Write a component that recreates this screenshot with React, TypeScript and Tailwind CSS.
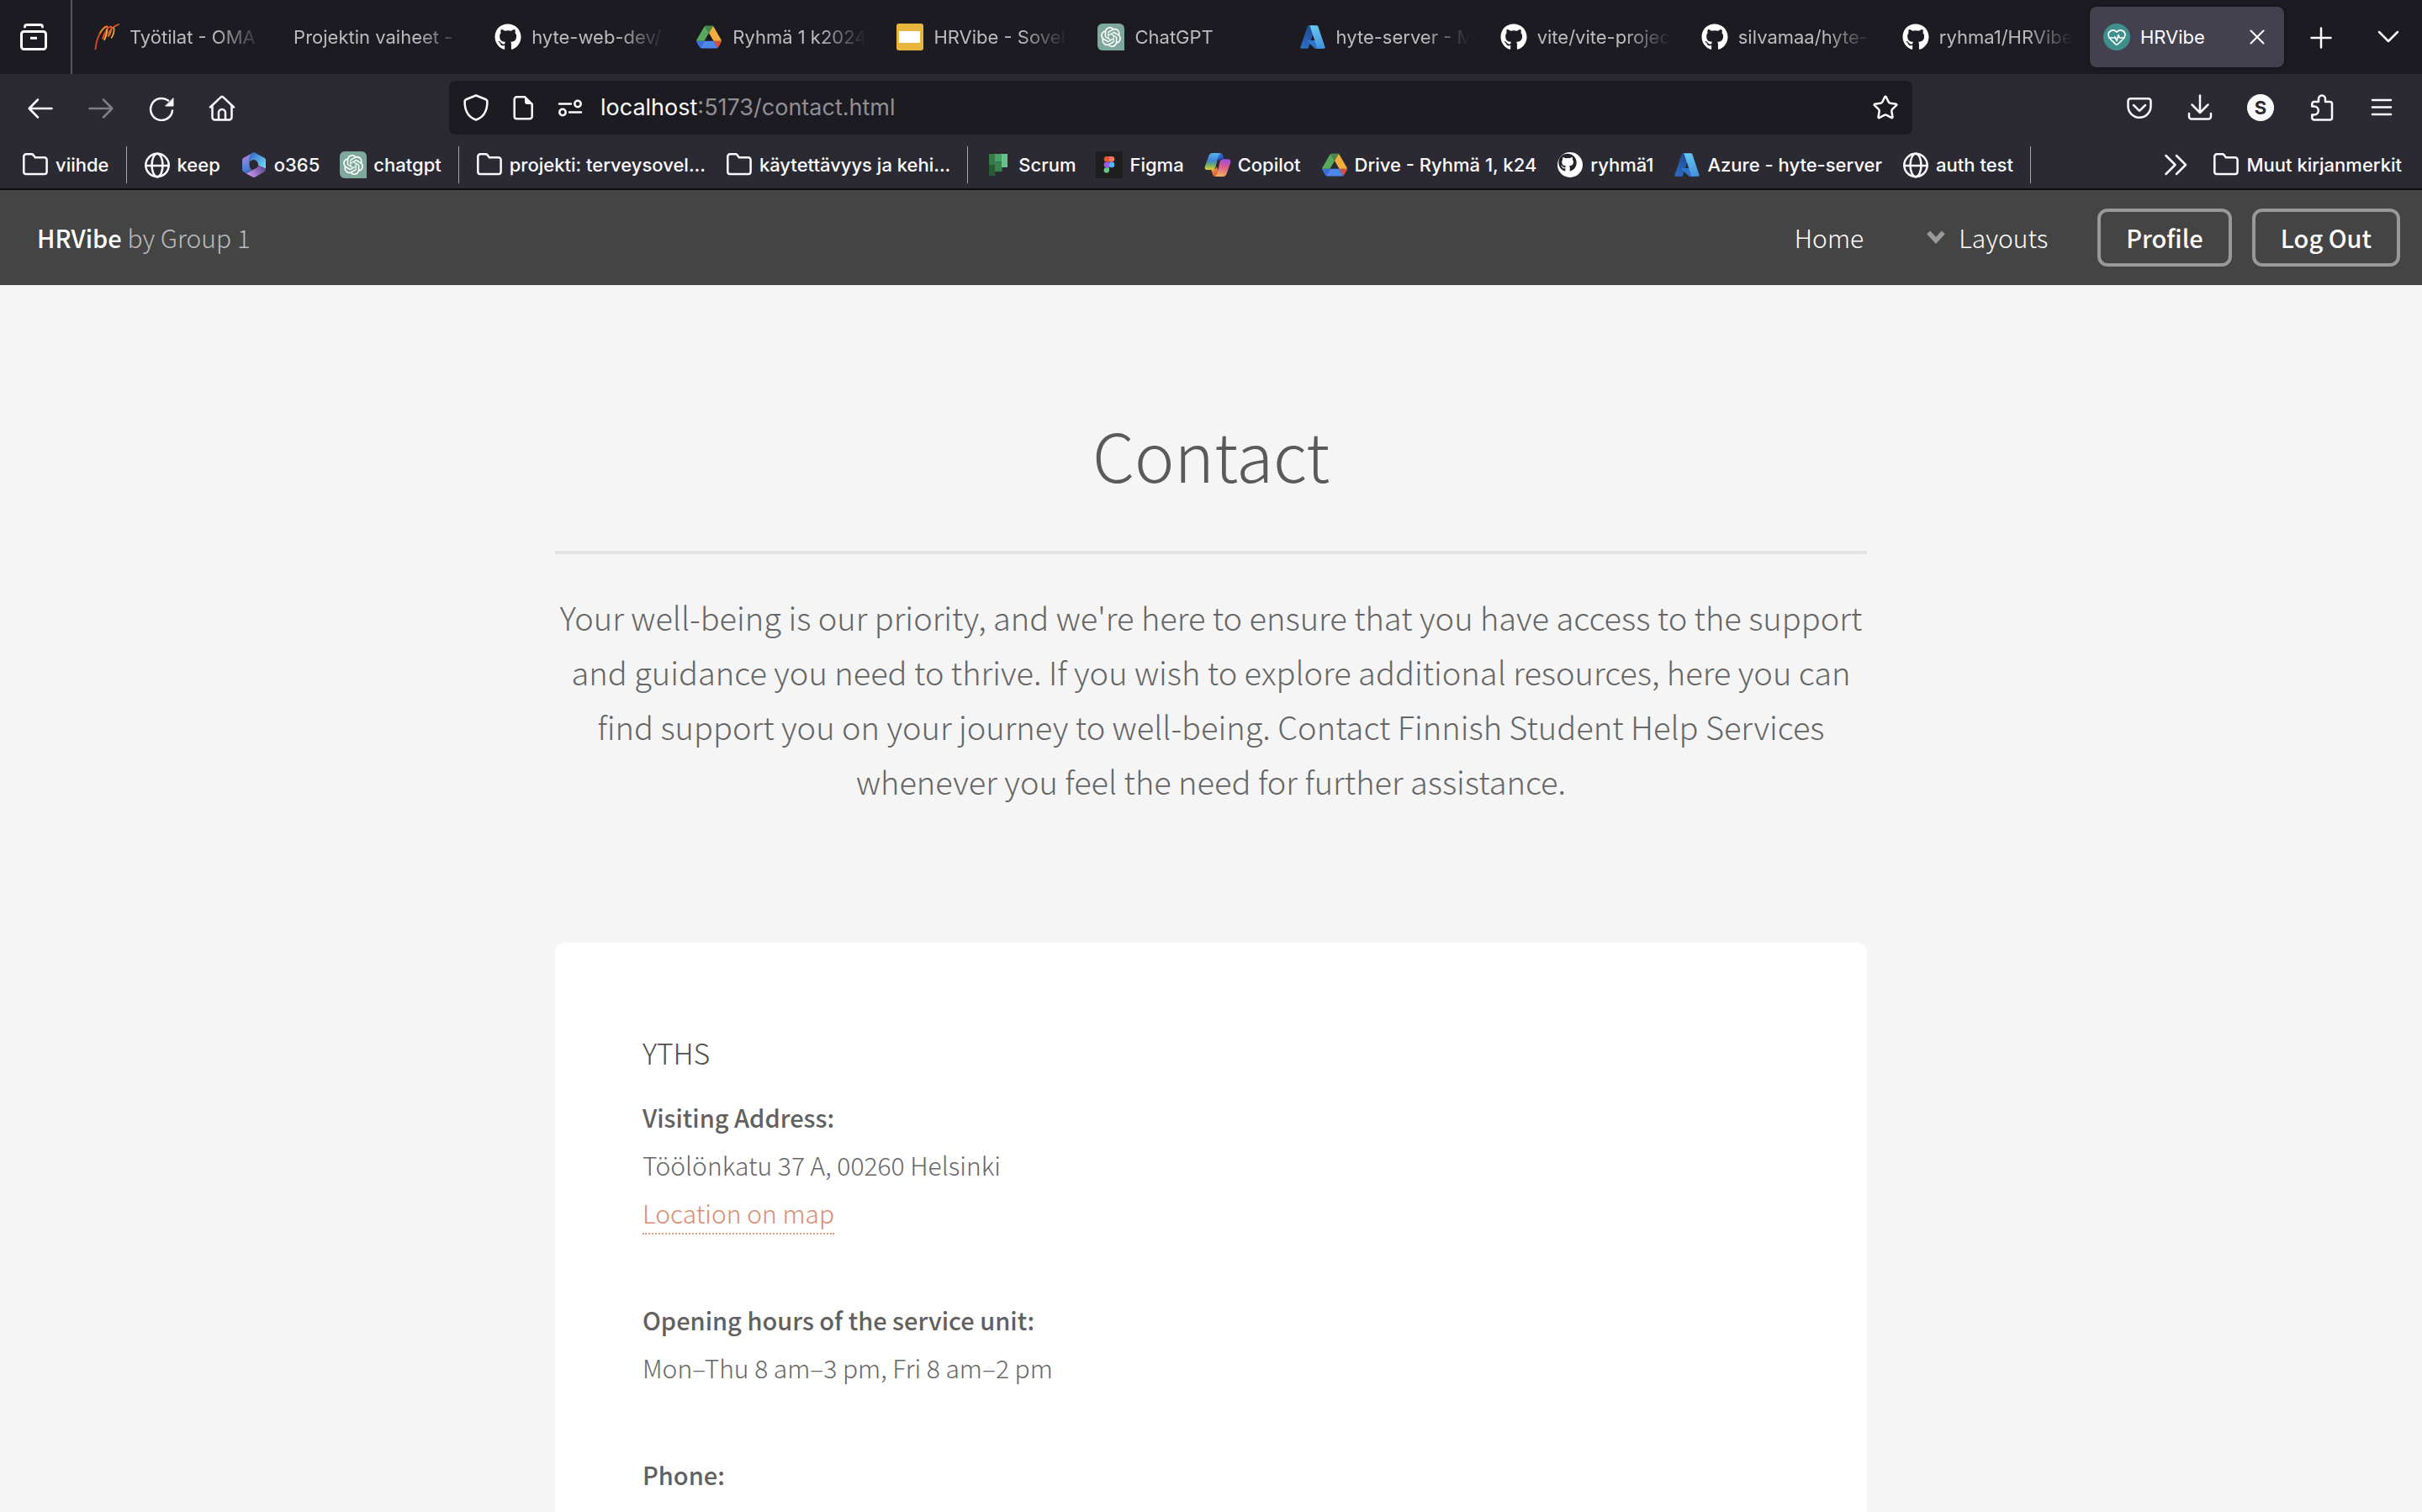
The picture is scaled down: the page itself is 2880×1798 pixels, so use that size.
import type { ReactNode } from "react";
import { HeartPulse, Star } from "lucide-react";
import { FaGithub } from "react-icons/fa";
import { SiOpenai } from "react-icons/si";

/* ---------- line icons of the browser chrome ---------- */

function Line({ children, className = "size-8" }: { children: ReactNode; className?: string }) {
  return (
    <svg
      viewBox="0 0 32 32"
      className={className + " shrink-0"}
      fill="none"
      stroke="currentColor"
      strokeWidth="2.5"
      strokeLinecap="round"
      strokeLinejoin="round"
      aria-hidden="true"
    >
      {children}
    </svg>
  );
}

const RecentIcon = () => (
  <Line>
    <path strokeWidth="3" d="M5.5 4c0-1.5 1-2.5 2.5-2.5h16c1.5 0 2.5 1 2.5 2.5" />
    <rect strokeWidth="3" x="1.5" y="9.5" width="29" height="21" rx="3" />
    <path strokeWidth="3" strokeLinecap="butt" d="M12 17.3h8" />
  </Line>
);
const BackIcon = () => (
  <Line>
    <path d="M13 6.5 2.7 17 13 27.5M3 17h26.5" />
  </Line>
);
const ForwardIcon = () => (
  <Line>
    <path d="m19 6.5 10.3 10.5L19 27.5M29 17H2.5" />
  </Line>
);
const ReloadIcon = () => (
  <Line>
    <path d="M29 19.5A13 13 0 1 1 24 7.6" />
    <path fill="currentColor" strokeWidth="1" d="M30 5v9H21z" />
  </Line>
);
const HomeIcon = () => (
  <Line>
    <path d="M2 15.5 14.5 3.7a2.2 2.2 0 0 1 3 0L30 15.5" />
    <path d="M4.5 14v13.5a3 3 0 0 0 3 3h17a3 3 0 0 0 3-3V14M12 30v-8a4 4 0 0 1 8 0v8" />
  </Line>
);
const ShieldIcon = () => (
  <Line>
    <path d="M16 1.5 27.2 6c1.5.6 2.2 1.6 2.2 3C29.4 19 26 27 16 30.5 6 27 2.6 19 2.6 9c0-1.4.7-2.4 2.2-3z" />
  </Line>
);
const PageIcon = () => (
  <Line>
    <path d="M8.5 3.3H18l8.7 8.7v14.5a2.8 2.8 0 0 1-2.8 2.8H8.5a2.8 2.8 0 0 1-2.8-2.8V6.1a2.8 2.8 0 0 1 2.8-2.8z" />
    <path fill="currentColor" strokeWidth="1" d="M18.5 3v6.5a2 2 0 0 0 2 2H27z" />
  </Line>
);
const PermissionsIcon = () => (
  <Line>
    <path d="M3 11.5h14M15 21.5h14" />
    <circle cx="25" cy="11.5" r="3.7" />
    <circle cx="7" cy="21.5" r="3.7" />
  </Line>
);
const PocketIcon = () => (
  <Line>
    <path d="M5.5 5.3h21a3 3 0 0 1 3 3v6a13.5 13.5 0 0 1-27 0v-6a3 3 0 0 1 3-3z" />
    <path d="m9 13 7 6.8 7-6.8" />
  </Line>
);
const DownloadIcon = () => (
  <Line>
    <path d="M16 1.5V21M6.5 12.5 16 22l9.5-9.5M3 23v3.5a3 3 0 0 0 3 3h20a3 3 0 0 0 3-3V23" />
  </Line>
);
const ExtensionIcon = () => (
  <Line>
    <path d="M5.3 14.5v-3A2.5 2.5 0 0 1 7.8 9H13V5.5a4 4 0 0 1 8 0V9h5.5a2.5 2.5 0 0 1 2.5 2.5V28a2.5 2.5 0 0 1-2.5 2.5H7.8A2.5 2.5 0 0 1 5.3 28v-3.5h2.5a5 5 0 0 0 0-10z" />
  </Line>
);
const MenuIcon = () => (
  <Line>
    <path d="M5 7h22M5 15.5h22M5 24h22" />
  </Line>
);
const PlusIcon = () => (
  <Line>
    <path d="M16 5.5v23M4.5 17h23" />
  </Line>
);
const CloseIcon = () => (
  <Line>
    <path strokeWidth="2" d="m8.5 8.5 15 15M23.5 8.5l-15 15" />
  </Line>
);
const ListTabsIcon = () => (
  <Line>
    <path d="M5 10l11 11L27 10" />
  </Line>
);
const OverflowIcon = () => (
  <Line>
    <path d="m4.5 5 11 11-11 11M17 5l11 11-11 11" />
  </Line>
);
const FolderIcon = () => (
  <Line>
    <path d="M2.3 24.2V6.1a2.8 2.8 0 0 1 2.8-2.8h6.3c.9 0 1.7.4 2.2 1l2.2 3h11a2.8 2.8 0 0 1 2.8 2.8v14.1a2.8 2.8 0 0 1-2.8 2.8H5.1a2.8 2.8 0 0 1-2.8-2.8z" />
  </Line>
);
const GlobeIcon = () => (
  <Line>
    <circle cx="16" cy="16.5" r="13.7" />
    <ellipse cx="16" cy="16.5" rx="6.5" ry="13.7" />
    <path d="M2.5 17h27" />
  </Line>
);

/* ---------- site icons ---------- */

const GitHubIcon = () => <FaGithub className="size-8 shrink-0 text-white" aria-hidden="true" />;

const GitHubCatIcon = () => (
  <svg viewBox="0 0 32 32" className="size-8 shrink-0" aria-hidden="true">
    <circle cx="16" cy="16" r="15" fill="#fff" />
    <FaGithub x="2" y="2.3" width="28" height="28" color="#24232a" />
  </svg>
);

const OpenAiIcon = () => (
  <span className="flex size-8 shrink-0 items-center justify-center rounded-md rounded-br-none bg-[#7fa89c]">
    <SiOpenai className="size-6 text-white" aria-hidden="true" />
  </span>
);

const HeartIcon = () => (
  <span className="flex size-8 shrink-0 items-center justify-center rounded-full bg-[#3f8f8e]">
    <HeartPulse className="size-6 text-white" strokeWidth={1.7} aria-hidden="true" />
  </span>
);

const OmaIcon = () => (
  <svg viewBox="0 0 32 32" className="size-8 shrink-0" fill="none" strokeLinecap="round" aria-hidden="true">
    <path d="M3.5 30.5C4.5 18 10 6.5 16.5 3.5c3-1 1.5 5-1 10-2 4-4 6-3.3 3.5C13.5 12 17.5 5.5 21 3.8" stroke="#d9472b" strokeWidth="1.8" />
    <path d="M9 11.5C11.5 7 14 4 17 3.5" stroke="#e9822e" strokeWidth="2" />
    <path d="M17 7c.5 4-1.5 10.5-3 12.5" stroke="#f0c23b" strokeWidth="1.5" />
    <path d="M21 3.8c3-.8 1.5 4.2 0 8-1.5 3.2-2.5 4.500-2.200 2C19.500 9 22.500 4.500 31 1" stroke="#e2662b" strokeWidth="1.8" />
    <path d="M25.5 5.5c.5 4-1 8.5-3 11.5" stroke="#f0b93b" strokeWidth="1.5" />
  </svg>
);

const DriveIcon = () => (
  <svg viewBox="-3 -5 93.3 88" className="size-8 shrink-0" aria-hidden="true">
    <path fill="#3a6fe0" d="m6.6 66.85 3.85 6.65c.8 1.4 1.95 2.5 3.3 3.3L27.5 53H0c0 1.55.4 3.1 1.2 4.5z" />
    <path fill="#57a75c" d="M43.65 25 29.9 1.2c-1.35.8-2.5 1.9-3.3 3.3l-25.4 44A9.06 9.06 0 0 0 0 53h27.5z" />
    <path fill="#d9503a" d="M73.55 76.8c1.35-.8 2.5-1.9 3.3-3.3l1.6-2.75 7.65-13.25c.8-1.4 1.2-2.95 1.2-4.5H59.8l5.85 11.5z" />
    <path fill="#468a47" d="M43.65 25 57.4 1.2C56.05.4 54.5 0 52.9 0H34.4c-1.6 0-3.15.45-4.5 1.2z" />
    <path fill="#4f86ec" d="M59.8 53H27.5L13.75 76.8c1.35.8 2.9 1.2 4.5 1.2h50.8c1.6 0 3.15-.45 4.5-1.2z" />
    <path fill="#f2ae3d" d="m73.4 26.5-12.7-22c-.8-1.4-1.95-2.5-3.3-3.3L43.65 25 59.8 53h27.45c0-1.55-.4-3.1-1.2-4.5z" />
  </svg>
);

const SlidesIcon = () => (
  <svg viewBox="0 0 32 32" className="size-8 shrink-0" aria-hidden="true">
    <rect width="32" height="32" rx="3" fill="#e8b53d" />
    <rect x="3" y="9" width="25" height="14" fill="#fff" />
  </svg>
);

const AzureIcon = () => (
  <svg viewBox="0 0 96 96" className="size-8 shrink-0" aria-hidden="true">
    <defs>
      <linearGradient id="azure-left" x1="58" y1="10" x2="24" y2="90" gradientUnits="userSpaceOnUse">
        <stop stopColor="#20488c" />
        <stop offset="1" stopColor="#2c6bc0" />
      </linearGradient>
      <linearGradient id="azure-right" x1="46" y1="8" x2="76" y2="90" gradientUnits="userSpaceOnUse">
        <stop stopColor="#68c8f2" />
        <stop offset="1" stopColor="#4490dc" />
      </linearGradient>
    </defs>
    <path fill="url(#azure-left)" d="M33.338 6.544h26.038l-27.03 80.087a4.152 4.152 0 0 1-3.933 2.824H8.149a4.145 4.145 0 0 1-3.928-5.47L29.404 9.368a4.152 4.152 0 0 1 3.934-2.825z" />
    <path fill="#2f74cd" d="M71.175 60.261h-41.29a1.911 1.911 0 0 0-1.305 3.309l26.532 24.764a4.171 4.171 0 0 0 2.846 1.121h23.38z" />
    <path fill="url(#azure-right)" d="M66.595 9.364a4.145 4.145 0 0 0-3.928-2.82H33.648a4.146 4.146 0 0 1 3.928 2.82l25.184 74.62a4.146 4.146 0 0 1-3.928 5.472h29.02a4.146 4.146 0 0 0 3.927-5.472z" />
  </svg>
);

const OfficeIcon = () => (
  <svg viewBox="0 0 32 32" className="size-8 shrink-0" aria-hidden="true">
    <defs>
      <linearGradient id="office-left" x1="6" y1="4" x2="10" y2="28" gradientUnits="userSpaceOnUse">
        <stop stopColor="#b07fdc" />
        <stop offset=".5" stopColor="#5f86dd" />
        <stop offset="1" stopColor="#2f67b8" />
      </linearGradient>
      <linearGradient id="office-right" x1="14" y1="3" x2="30" y2="18" gradientUnits="userSpaceOnUse">
        <stop stopColor="#3c72cf" />
        <stop offset="1" stopColor="#72dbf8" />
      </linearGradient>
      <linearGradient id="office-bottom" x1="8" y1="29" x2="29" y2="18" gradientUnits="userSpaceOnUse">
        <stop stopColor="#d49bf2" />
        <stop offset="1" stopColor="#5c4690" />
      </linearGradient>
    </defs>
    <path fill="url(#office-left)" d="M16 1 4 7.6C2.7 8.3 2 9.4 2 10.8v10.7c0 1.3.7 2.4 1.8 3L7 26.4l7-4.4c-2.5-1-3.5-3-3.5-6V8z" />
    <path fill="url(#office-right)" d="m16 1 12 6.6c1.3.7 2 1.8 2 3.2v9.7l-9-4c0-4-2.5-6.5-6-6.5l-4.5 2V7c0-2 1-3.3 2.5-4.2z" />
    <path fill="url(#office-bottom)" d="M30 20.5c0 2-.7 3.2-2 3.9l-10 5.9c-1.3.8-2.7.8-4 0L7 26.4l13-7.4c.8-1 1-1.8 1-2.5z" />
    <circle cx="16" cy="16" r="4.7" fill="#2b2a33" />
  </svg>
);

const ScrumIcon = () => (
  <svg viewBox="0 0 32 32" className="size-8 shrink-0" aria-hidden="true">
    <path fill="#387a48" d="M5 3h7.5v13H5z" />
    <path fill="#2a5936" d="M5 16h7.5v13H5z" />
    <path fill="#4a9f66" d="M12 3h8.5v9.5H12z" />
    <path fill="#3a8350" d="M12 12.5h8.5V24H12z" />
    <path fill="#63c389" d="M20 3h7v16h-7z" />
  </svg>
);

const FigmaIcon = () => (
  <svg viewBox="0 0 32 32" className="size-8 shrink-0" aria-hidden="true">
    <path fill="#1e1e1e" d="M0 0h32v32H0z" />
    <path fill="#e5552f" d="M16 6v6.6h-3a3.3 3.3 0 0 1 0-6.6z" />
    <path fill="#ee7a66" d="M16 6h3a3.3 3.3 0 0 1 0 6.6h-3z" />
    <path fill="#9a58f5" d="M16 12.6v6.6h-3a3.3 3.3 0 0 1 0-6.6z" />
    <circle cx="19" cy="15.9" r="3.3" fill="#54b6f8" />
    <path fill="#5ecb85" d="M16 19.2v3.3a3.2 3.2 0 1 1-3-3.3z" />
  </svg>
);

const CopilotIcon = () => (
  <svg viewBox="0 0 32 32" className="size-8 shrink-0" aria-hidden="true">
    <defs>
      <linearGradient id="copilot-left" x1="9" y1="2" x2="8" y2="22" gradientUnits="userSpaceOnUse">
        <stop stopColor="#55b4ee" />
        <stop offset=".45" stopColor="#3f84d6" />
        <stop offset=".7" stopColor="#6cae62" />
        <stop offset="1" stopColor="#e8cb3c" />
      </linearGradient>
      <linearGradient id="copilot-right" x1="25" y1="9" x2="21" y2="30" gradientUnits="userSpaceOnUse">
        <stop stopColor="#9a50e0" />
        <stop offset=".45" stopColor="#dc5a8c" />
        <stop offset="1" stopColor="#f0b062" />
      </linearGradient>
      <linearGradient id="copilot-top" x1="16" y1="2" x2="23" y2="10" gradientUnits="userSpaceOnUse">
        <stop stopColor="#3d8fe0" />
        <stop offset="1" stopColor="#1c35b4" />
      </linearGradient>
      <linearGradient id="copilot-base" x1="8" y1="21" x2="16" y2="30" gradientUnits="userSpaceOnUse">
        <stop stopColor="#f0a03c" />
        <stop offset="1" stopColor="#dd4b32" />
      </linearGradient>
    </defs>
    <path fill="url(#copilot-top)" d="M14 2h4.5c2 0 3 1 3.5 2.5L23.5 9H21c-2 0-3 1-3.5 3z" />
    <path fill="url(#copilot-base)" d="M18 30h-4.5c-2 0-3-1-3.500-2.500L8 21h3.500c2 0 3-1 3.500-3z" />
    <path fill="url(#copilot-left)" d="M17.5 2H10C7.5 2 6 3.5 5.2 6L1 17.5C0 20 1 22 3.5 22H9c2.5 0 4-1.5 4.7-4L16 8.5c.5-2.5 1-5.5 3.5-6z" />
    <path fill="url(#copilot-right)" d="M14.5 30H22c2.500 0 4-1.500 4.800-4L31 14c1-2.500 0-4.700-2.500-4.700H23c-2.500 0-4 1.500-4.700 4L16 23.500c-.5 2.500-1 5.700-3.500 6.200z" />
  </svg>
);

/* ---------- browser chrome ---------- */

type Tab = { label: string; icon?: ReactNode; active?: boolean };

const tabs: Tab[] = [
  { label: "Työtilat - OMA", icon: <OmaIcon /> },
  { label: "Projektin vaiheet -" },
  { label: "hyte-web-dev/", icon: <GitHubIcon /> },
  { label: "Ryhmä 1 k2024", icon: <DriveIcon /> },
  { label: "HRVibe - Sovel", icon: <SlidesIcon /> },
  { label: "ChatGPT", icon: <OpenAiIcon /> },
  { label: "hyte-server - M", icon: <AzureIcon /> },
  { label: "vite/vite-projec", icon: <GitHubIcon /> },
  { label: "silvamaa/hyte-", icon: <GitHubIcon /> },
  { label: "ryhma1/HRVibe", icon: <GitHubIcon /> },
  { label: "HRVibe", icon: <HeartIcon />, active: true },
];

function TabStrip() {
  return (
    <div className="flex h-[88px] items-stretch bg-[#1c1b22]">
      <div className="flex items-center border-r-2 border-[#55545c] pr-7 pl-6">
        <button type="button" aria-label="Recent browsing">
          <RecentIcon />
        </button>
      </div>
      <div role="tablist" className="ml-1 flex min-w-0 flex-1">
        {tabs.map((t) => (
          <div key={t.label} className="flex min-w-0 flex-1 px-1 py-2">
            {t.active ? (
              <div className="flex min-w-0 flex-1 items-center rounded-lg bg-[#42414d] px-4 shadow-[0_0_4px_rgba(0,0,0,0.5)]">
                <button type="button" role="tab" aria-selected="true" className="flex min-w-0 flex-1 items-center gap-3 text-[22px] text-[#fbfbfe]">
                  {t.icon}
                  {t.label}
                </button>
                <button type="button" aria-label="Close tab">
                  <CloseIcon />
                </button>
              </div>
            ) : (
              <button type="button" role="tab" aria-selected="false" className="flex min-w-0 flex-1 items-center gap-3 pr-3 pl-4 text-left text-[22px] text-[#bcbcc0]">
                {t.icon}
                <span className="min-w-0 flex-1 overflow-hidden whitespace-nowrap [mask-image:linear-gradient(to_left,transparent,black_56px)]">
                  {t.label}
                </span>
              </button>
            )}
          </div>
        ))}
      </div>
      <div className="flex items-center gap-12 px-6">
        <button type="button" aria-label="New tab">
          <PlusIcon />
        </button>
        <button type="button" aria-label="List all tabs">
          <ListTabsIcon />
        </button>
      </div>
    </div>
  );
}

function ToolButton({ label, children, disabled = false }: { label: string; children: ReactNode; disabled?: boolean }) {
  return (
    <button type="button" aria-label={label} disabled={disabled} className="flex h-16 w-16 items-center justify-center disabled:opacity-40">
      {children}
    </button>
  );
}

function NavBar() {
  return (
    <div className="flex h-20 items-center px-4">
      <div className="flex gap-2">
        <ToolButton label="Back"><BackIcon /></ToolButton>
        <ToolButton label="Forward" disabled><ForwardIcon /></ToolButton>
        <ToolButton label="Reload"><ReloadIcon /></ToolButton>
        <ToolButton label="Home page"><HomeIcon /></ToolButton>
      </div>
      <div className="mx-[238px] flex h-16 min-w-0 flex-1 items-center rounded-lg bg-[#1c1b22] px-4">
        <div className="flex gap-6">
          <button type="button" aria-label="Tracking protection"><ShieldIcon /></button>
          <button type="button" aria-label="Site information"><PageIcon /></button>
          <button type="button" aria-label="Permissions"><PermissionsIcon /></button>
        </div>
        <label className="ml-5 flex min-w-0 flex-1 items-center text-[27px]">
          <span>localhost</span>
          <input
            type="text"
            aria-label="Address"
            defaultValue=":5173/contact.html"
            className="min-w-0 flex-1 bg-transparent text-[#8f8f94] outline-none"
          />
        </label>
        <button type="button" aria-label="Bookmark this page">
          <Star className="size-8" strokeWidth={1.9} />
        </button>
      </div>
      <div className="flex gap-2">
        <ToolButton label="Save to Pocket"><PocketIcon /></ToolButton>
        <ToolButton label="Downloads"><DownloadIcon /></ToolButton>
        <ToolButton label="Account">
          <span className="flex size-8 items-center justify-center rounded-full bg-[#fbfbfe] text-[22px] font-bold text-[#2b2a33]">S</span>
        </ToolButton>
        <ToolButton label="Extensions"><ExtensionIcon /></ToolButton>
        <ToolButton label="Application menu"><MenuIcon /></ToolButton>
      </div>
    </div>
  );
}

type Bookmark = { label: string; icon: ReactNode };

const bookmarkGroups: Bookmark[][] = [
  [{ label: "viihde", icon: <FolderIcon /> }],
  [
    { label: "keep", icon: <GlobeIcon /> },
    { label: "o365", icon: <OfficeIcon /> },
    { label: "chatgpt", icon: <OpenAiIcon /> },
  ],
  [
    { label: "projekti: terveysovel...", icon: <FolderIcon /> },
    { label: "käytettävyys ja kehi...", icon: <FolderIcon /> },
  ],
  [
    { label: "Scrum", icon: <ScrumIcon /> },
    { label: "Figma", icon: <FigmaIcon /> },
    { label: "Copilot", icon: <CopilotIcon /> },
    { label: "Drive - Ryhmä 1, k24", icon: <DriveIcon /> },
    { label: "ryhmä1", icon: <GitHubCatIcon /> },
    { label: "Azure - hyte-server", icon: <AzureIcon /> },
    { label: "auth test", icon: <GlobeIcon /> },
  ],
];

function BookmarkButton({ label, icon }: Bookmark) {
  return (
    <button type="button" className="flex items-center gap-2 px-3 whitespace-nowrap">
      {icon}
      {label}
    </button>
  );
}

function BookmarksBar() {
  return (
    <div className="flex h-14 items-center pr-3 pl-3.5 text-[22px] font-medium">
      {bookmarkGroups.map((group) => (
        <div key={group[0].label} className="flex items-center">
          {group.map((b) => (
            <BookmarkButton key={b.label} {...b} />
          ))}
          <span className="mx-2 h-11 w-px bg-[#a5a5a9]" />
        </div>
      ))}
      <button type="button" aria-label="More bookmarks" className="mr-1 ml-auto px-3">
        <OverflowIcon />
      </button>
      <BookmarkButton label="Muut kirjanmerkit" icon={<FolderIcon />} />
    </div>
  );
}

/* ---------- the site ---------- */

function SiteHeader() {
  return (
    <header className="flex h-[113px] items-center bg-[#444444] pr-[26px] pl-11 text-[30px] font-light text-white">
      <a href="#home" className="text-[#bcbcbc]">
        <span className="text-[29px] font-medium text-white">HRVibe</span> by Group 1
      </a>
      <nav className="ml-auto flex items-center">
        <a href="#home">Home</a>
        <a href="#layouts" className="mr-[59px] ml-[75px] flex items-center gap-4">
          <svg viewBox="0 0 22 22" className="size-[22px]" fill="none" stroke="#999999" strokeWidth="5.5" strokeLinecap="square" aria-hidden="true">
            <path d="M4 6.5l7 7.5 7-7.5" />
          </svg>
          Layouts
        </a>
        <div className="flex gap-6 text-[29px] font-medium">
          <a href="#profile" className="flex h-[69px] items-center rounded-xl border-4 border-[#999999] px-[30px]">Profile</a>
          <a href="#logout" className="flex h-[69px] items-center rounded-xl border-4 border-[#999999] px-[30px]">Log Out</a>
        </div>
      </nav>
    </header>
  );
}

function Strong({ children }: { children: ReactNode }) {
  return <strong className="text-[29px] font-medium text-[#616161]">{children}</strong>;
}

function ContactPage() {
  return (
    <main className="mx-auto max-w-[1560px] pt-[150px]">
      <div className="text-center">
        <h2 className="border-b-4 border-[#e4e4e4] pb-[66px] text-[80px] leading-[100px] font-light text-[#5a5a5a]">Contact</h2>
        <p className="mt-[42px] text-[38px] leading-[65px] font-light text-[#666666]">
          Your well-being is our priority, and we're here to ensure that you have access to the support and guidance you
          need to thrive. If you wish to explore additional resources, here you can find support you on your journey to
          well-being. Contact Finnish Student Help Services whenever you feel the need for further assistance.
        </p>
      </div>
      <section className="mt-40 rounded-xl bg-white p-[104px] text-[30px] leading-[57px] font-light text-[#666666]">
        <h3 className="text-[34px] leading-[54px] text-[#505050]">YTHS</h3>
        <p className="mt-[21px] mb-[70px]">
          <Strong>Visiting Address:</Strong>
          <br />
          Töölönkatu 37 A, 00260 Helsinki
          <br />
          <a href="#map" className="border-b-2 border-dotted border-[#e89980] pb-0.5 text-[#de8a6d]">Location on map</a>
        </p>
        <p className="mb-[70px]">
          <Strong>Opening hours of the service unit:</Strong>
          <br />
          Mon–Thu 8 am–3 pm, Fri 8 am–2 pm
        </p>
        <p>
          <Strong>Phone:</Strong>
        </p>
      </section>
    </main>
  );
}

export default function App() {
  return (
    <div className="flex h-screen flex-col overflow-hidden bg-[#f5f5f5]">
      <div className="shrink-0 border-b-2 border-[#0c0c0d] bg-[#2b2a33] font-['Inter',sans-serif] text-[#fbfbfe]">
        <TabStrip />
        <NavBar />
        <BookmarksBar />
      </div>
      <div className="min-h-0 flex-1 overflow-hidden font-['Noto_Sans_CJK_SC',sans-serif]">
        <SiteHeader />
        <ContactPage />
      </div>
    </div>
  );
}
